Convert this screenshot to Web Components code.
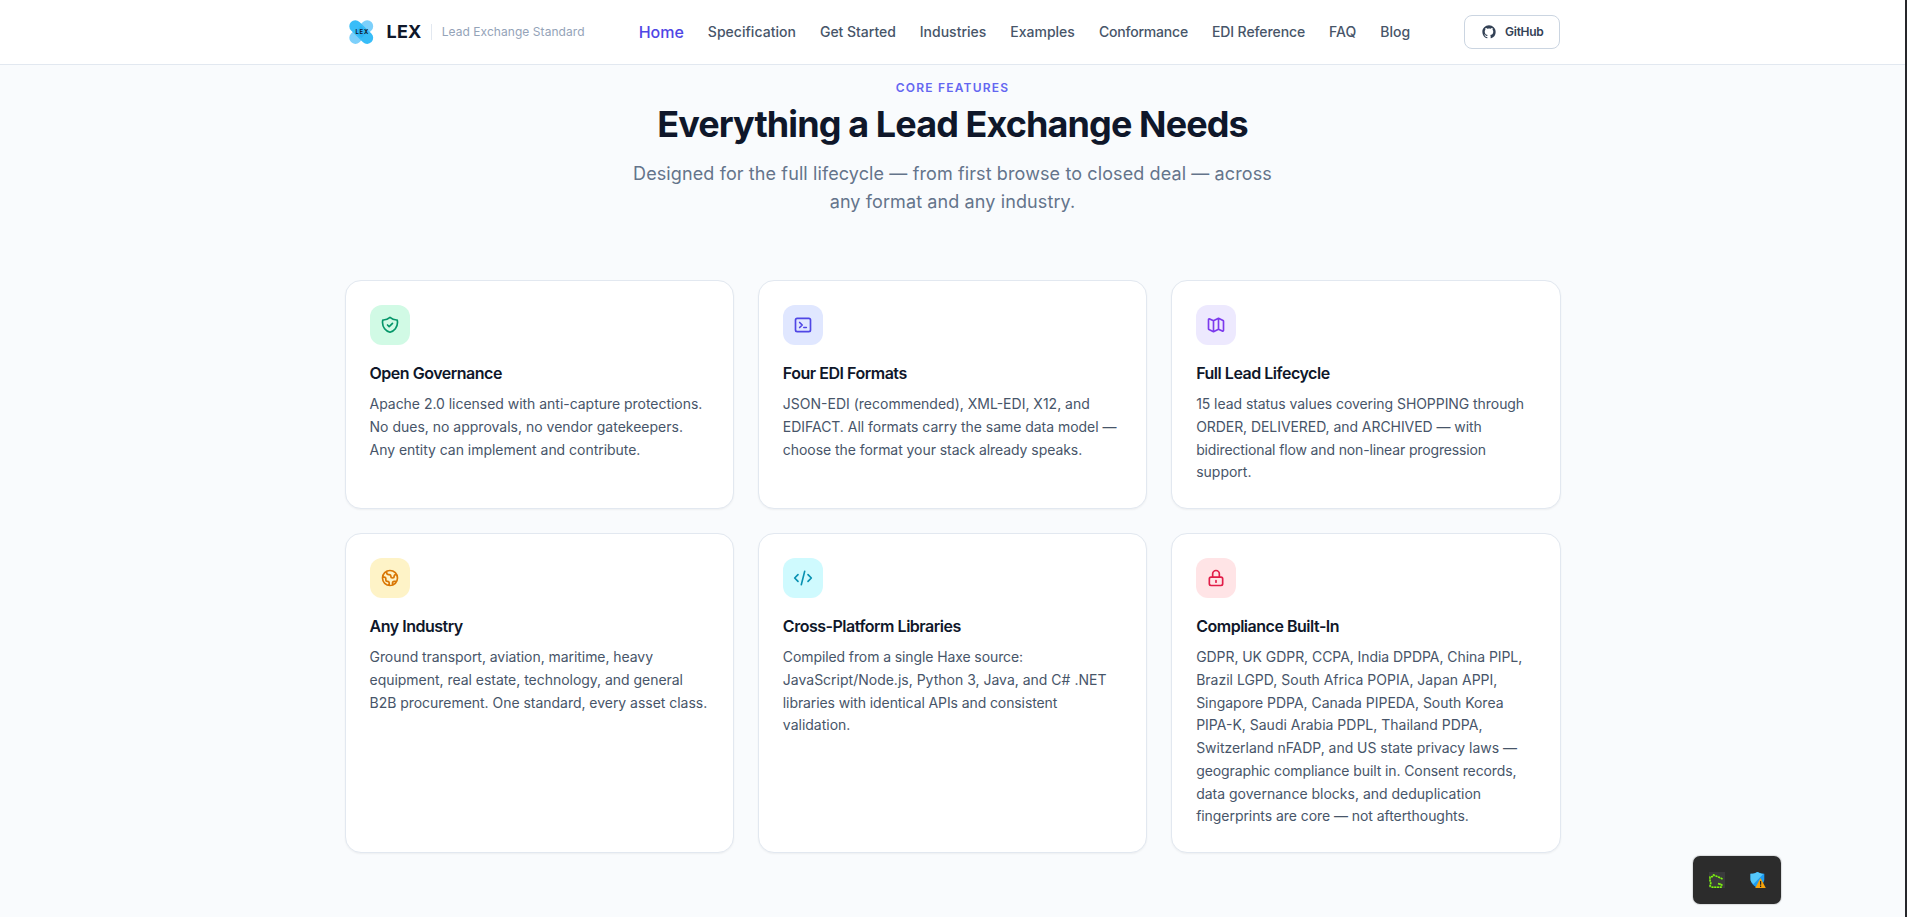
<!DOCTYPE html>
<html lang="en">
<head>
<meta charset="utf-8">
<title>LEX – Lead Exchange Standard</title>
<style>
  html, body { margin: 0; height: 100%; overflow: hidden; }
  body { font-family: Inter, "Liberation Sans", sans-serif; background: #f9fbfd; color: #0f172a; }
  .t1 { letter-spacing: -0.03px; }
  .t2 { letter-spacing: -0.06px; }
  .t3 { letter-spacing: -0.1px; }
  .t4 { letter-spacing: -0.14px; }
</style>
</head>
<body>
<lex-page>
  <lex-header slot="header">
    <lex-brand slot="brand" name="LEX">Lead Exchange Standard</lex-brand>
    <lex-link active>Home</lex-link>
    <lex-link style="letter-spacing:.03px">Specification</lex-link>
    <lex-link style="letter-spacing:-.03px">Get Started</lex-link>
    <lex-link>Industries</lex-link>
    <lex-link>Examples</lex-link>
    <lex-link style="letter-spacing:-.2px">Conformance</lex-link>
    <lex-link style="letter-spacing:-.1px">EDI Reference</lex-link>
    <lex-link>FAQ</lex-link>
    <lex-link>Blog</lex-link>
    <lex-github slot="action">GitHub</lex-github>
  </lex-header>
  <lex-intro>
    <span slot="label">CORE FEATURES</span>
    <span slot="title">Everything a Lead Exchange Needs</span>
    Designed for the full lifecycle — from first browse to closed deal — across<br>any format and any industry.
  </lex-intro>
  <lex-grid>
    <lex-card icon="shield" heading="Open Governance" style="--bg:#d1fae5;--fg:#059669"><span class="t1">Apache 2.0 licensed with anti-capture protections.</span><br>No dues, no approvals, no vendor gatekeepers.<br><span class="t1">Any entity can implement and contribute.</span></lex-card>
    <lex-card icon="terminal" heading="Four EDI Formats" style="--bg:#e0e7ff;--fg:#4f46e5">JSON-EDI (recommended), XML-EDI, X12, and<br><span class="t1">EDIFACT. All formats carry the same data model —</span><br><span class="t2">choose the format your stack already speaks.</span></lex-card>
    <lex-card icon="map" heading="Full Lead Lifecycle" style="--bg:#ede9fe;--fg:#7c3aed"><span class="t2">15 lead status values covering SHOPPING through</span><br><span class="t2">ORDER, DELIVERED, and ARCHIVED — with</span><br><span class="t4">bidirectional flow and non-linear progression</span><br>support.</lex-card>
    <lex-card icon="globe" heading="Any Industry" style="--bg:#fef3c7;--fg:#d97706"><span class="t2">Ground transport, aviation, maritime, heavy</span><br><span class="t1">equipment, real estate, technology, and general</span><br><span class="t1">B2B procurement. One standard, every asset class.</span></lex-card>
    <lex-card icon="code" heading="Cross-Platform Libraries" style="--bg:#cffafe;--fg:#0891b2"><span class="t3">Compiled from a single Haxe source:</span><br>JavaScript/Node.js, Python 3, Java, and C# .NET<br><span class="t3">libraries with identical APIs and consistent</span><br>validation.</lex-card>
    <lex-card icon="lock" heading="Compliance Built-In" style="--bg:#ffe4e6;--fg:#e11d48"><span class="t2">GDPR, UK GDPR, CCPA, India DPDPA, China PIPL,</span><br>Brazil LGPD, South Africa POPIA, Japan APPI,<br><span class="t1">Singapore PDPA, Canada PIPEDA, South Korea</span><br>PIPA-K, Saudi Arabia PDPL, Thailand PDPA,<br><span class="t1">Switzerland nFADP, and US state privacy laws —</span><br><span class="t3">geographic compliance built in. Consent records,</span><br>data governance blocks, and deduplication<br><span class="t2">fingerprints are core — not afterthoughts.</span></lex-card>
  </lex-grid>
  <lex-tray slot="overlay"></lex-tray>
</lex-page>
<script>
const define = (name, html, setup) => {
  const tpl = document.createElement('template');
  tpl.innerHTML = html;
  customElements.define(name, class extends HTMLElement {
    constructor() {
      super();
      this.attachShadow({ mode: 'open' }).append(tpl.content.cloneNode(true));
    }
    connectedCallback() { if (setup) setup(this, this.shadowRoot); }
  });
};

define('lex-page', `
<style>
  :host { display: block; box-sizing: border-box; height: 917px; border-right: 2px solid #26272b; background: #f9fbfd; position: relative; overflow: hidden; }
  main { padding-top: 15px; }
</style>
<slot name="header"></slot>
<main><slot></slot></main>
<slot name="overlay"></slot>`);

define('lex-header', `
<style>
  :host { display: block; background: #fff; border-bottom: 1px solid #e2e8f0; height: 64px; }
  .row { width: 1216px; height: 64px; margin: 0 auto; display: flex; align-items: center; justify-content: space-between; }
  nav { display: flex; align-items: center; gap: 24px; }
</style>
<div class="row"><slot name="brand"></slot><nav><slot></slot></nav><slot name="action"></slot></div>`);

define('lex-brand', `
<style>
  :host { display: flex; align-items: center; }
  svg { width: 32px; height: 32px; display: block; margin-right: 10px; }
  b { font-size: 18px; line-height: 28px; font-weight: 700; letter-spacing: 0.25px; color: #0f172a; }
  .tag { margin-left: 9px; border-left: 1px solid #e2e8f0; padding-left: 10px; font-size: 12px; line-height: 16px; letter-spacing: .06px; color: #94a3b8; }
</style>
<svg viewBox="0 0 32 32">
  <g stroke-linecap="round" stroke-width="12">
    <path d="M10.300 21.900 22.200 10.200" stroke="#7dd0fb"/>
    <path d="M10.300 10.200 22.200 21.900" stroke="#38bdf8"/>
    <path d="m16 10 6 6-5.500 6-6-6z" fill="#22aaf0" stroke="none" opacity=".5"/>
  </g>
  <text x="17.300" y="18.300" text-anchor="middle" font-family="Inter" font-weight="700" font-size="5.800" letter-spacing=".9" fill="#0f172a">LEX</text>
</svg><b></b><span class="tag"><slot></slot></span>`,
  (el, root) => { root.querySelector('b').textContent = el.getAttribute('name'); });

define('lex-link', `
<style>
  :host { display: block; font-size: 14px; line-height: 20px; font-weight: 500; color: #475569; white-space: nowrap; }
  :host([active]) { font-size: 16px; color: #4f46e5; }
</style><slot></slot>`);

define('lex-github', `
<style>
  :host { box-sizing: border-box; display: flex; align-items: center; gap: 8px; height: 34px; padding: 0 16px; border: 1px solid #cbd5e1; border-radius: 8px; background: #fff; font-size: 12px; line-height: 16px; font-weight: 600; letter-spacing: -.3px; color: #334155; }
  svg { width: 16px; height: 16px; }
</style>
<svg viewBox="0 0 24 24" fill="currentColor"><path d="M12 2C6.477 2 2 6.484 2 12.017c0 4.425 2.865 8.18 6.839 9.504.5.092.682-.217.682-.483 0-.237-.008-.868-.013-1.703-2.782.605-3.369-1.343-3.369-1.343-.454-1.158-1.11-1.466-1.11-1.466-.908-.62.069-.608.069-.608 1.003.07 1.531 1.032 1.531 1.032.892 1.53 2.341 1.088 2.91.832.092-.647.35-1.088.636-1.338-2.22-.253-4.555-1.113-4.555-4.951 0-1.093.39-1.988 1.029-2.688-.103-.253-.446-1.272.098-2.65 0 0 .84-.27 2.75 1.026A9.564 9.564 0 0112 6.844c.85.004 1.705.115 2.504.337 1.909-1.296 2.747-1.027 2.747-1.027.546 1.379.202 2.398.1 2.651.64.7 1.028 1.595 1.028 2.688 0 3.848-2.339 4.695-4.566 4.943.359.309.678.92.678 1.855 0 1.338-.012 2.419-.012 2.747 0 .268.18.58.688.482A10.019 10.019 0 0022 12.017C22 6.484 17.522 2 12 2z"/></svg>
<slot></slot>`);

define('lex-intro', `
<style>
  :host { display: block; text-align: center; }
  .label { font-size: 12px; line-height: 16px; font-weight: 600; letter-spacing: 1.2px; color: #6366f1; margin-bottom: 8px; }
  h2 { margin: 0; font-size: 36px; line-height: 40px; font-weight: 700; letter-spacing: -0.9px; color: #0f172a; }
  p { margin: 16px 0 64px; font-size: 18px; line-height: 28px; letter-spacing: .11px; color: #64748b; }
</style>
<div class="label"><slot name="label"></slot></div>
<h2><slot name="title"></slot></h2>
<p><slot></slot></p>`);

define('lex-grid', `
<style>
  :host { display: grid; grid-template-columns: repeat(3, 1fr); gap: 24px; width: 1216px; margin: 0 auto; }
</style><slot></slot>`);

const ICONS = {
  shield: '<path d="M9 12l2 2 4-4m5.618-4.016A11.955 11.955 0 0112 2.944a11.955 11.955 0 01-8.618 3.04A12.02 12.02 0 003 9c0 5.591 3.824 10.29 9 11.622 5.176-1.332 9-6.03 9-11.622 0-1.042-.133-2.052-.382-3.016z"/>',
  terminal: '<path d="M8 9l3 3-3 3m5 0h3M5 20h14a2 2 0 002-2V6a2 2 0 00-2-2H5a2 2 0 00-2 2v12a2 2 0 002 2z"/>',
  map: '<path d="M9 20l-5.447-2.724A1 1 0 013 16.382V5.618a1 1 0 011.447-.894L9 7m0 13l6-3m-6 3V7m6 10l4.553 2.276A1 1 0 0021 18.382V7.618a1 1 0 00-.553-.894L15 4m0 13V4m0 0L9 7"/>',
  globe: '<path d="M3.055 11H5a2 2 0 012 2v1a2 2 0 002 2 2 2 0 012 2v2.945M8 3.935V5.5A2.5 2.5 0 0010.5 8h.5a2 2 0 012 2 2 2 0 104 0 2 2 0 012-2h1.064M15 20.488V18a2 2 0 012-2h3.064M21 12a9 9 0 11-18 0 9 9 0 0118 0z"/>',
  code: '<path d="M10 20l4-16m4 4l4 4-4 4M6 16l-4-4 4-4"/>',
  lock: '<path d="M12 15v2m-6 4h12a2 2 0 002-2v-6a2 2 0 00-2-2H6a2 2 0 00-2 2v6a2 2 0 002 2zm10-10V7a4 4 0 00-8 0v4h8z"/>'
};

define('lex-card', `
<style>
  :host { display: block; box-sizing: border-box; padding: 24px; border: 1px solid #e2e8f0; border-radius: 16px; background: #fff; box-shadow: 0 1px 2px rgba(0,0,0,.05); }
  .icon { width: 40px; height: 40px; border-radius: 12px; background: var(--bg); color: var(--fg); display: grid; place-items: center; margin-bottom: 16px; }
  svg { width: 20px; height: 20px; fill: none; stroke: currentColor; stroke-width: 2; stroke-linecap: round; stroke-linejoin: round; }
  h3 { margin: 0 0 8px; font-size: 16px; line-height: 24px; font-weight: 600; letter-spacing: -0.48px; color: #0f172a; }
  p { margin: 0; font-size: 14px; line-height: 22.75px; color: #475569; white-space: nowrap; }
</style>
<div class="icon"><svg viewBox="0 0 24 24"></svg></div>
<h3></h3>
<p><slot></slot></p>`,
  (el, root) => {
    root.querySelector('svg').innerHTML = ICONS[el.getAttribute('icon')];
    root.querySelector('h3').textContent = el.getAttribute('heading');
  });

define('lex-tray', `
<style>
  :host { position: absolute; left: 1693px; top: 856px; width: 88px; height: 48px; border-radius: 7px; background: #2c2c2c; box-shadow: 0 0 1px 1px rgba(0,0,0,.12); display: flex; align-items: center; justify-content: center; gap: 25px; }
  svg { width: 16px; height: 16px; display: block; }
</style>
<svg viewBox="0 0 16 16"><rect width="16" height="16" fill="#3a3a3c"/><path d="M13.500 7 10 5.300 4.500 3 3.500 4.500 1 5v3.500l.8 2.500L1 14l2.500 1.300H12l.8-2.300-3.800-1.500 3.500.8" fill="none" stroke="#3f7a14" stroke-width="1.600"/><path d="M13.500 7 10 5.300 4.500 3 3.500 4.500 1 5v3.500l.8 2.500L1 14l2.500 1.300H12l.8-2.300-3.800-1.500 3.500.8" fill="none" stroke="#84f01a" stroke-width="1.500" stroke-dasharray="2 .8"/></svg>
<svg viewBox="0 0 16 16"><path d="M7.500 0c2 1.300 4.300 1.800 6.800 1.800V7c0 4-3 7-6.800 9C3.700 14 .5 11 .5 7V1.800C3 1.800 5.500 1.300 7.500 0z" fill="#1f9cf0"/><path d="M.5 7V1.800C3 1.800 5.500 1.300 7.500 0c2 1.300 4 1.700 6 1.800L3.500 12C1.500 10.500.5 9 .5 7z" fill="#55c8fb"/><path d="M10.500 6 15.800 16H5.200z" fill="#f5a20b"/><path d="M10 9h1.200v3.700H10zM10 13.600h1.200v1.300H10z" fill="#222"/></svg>`);
</script>
</body>
</html>
